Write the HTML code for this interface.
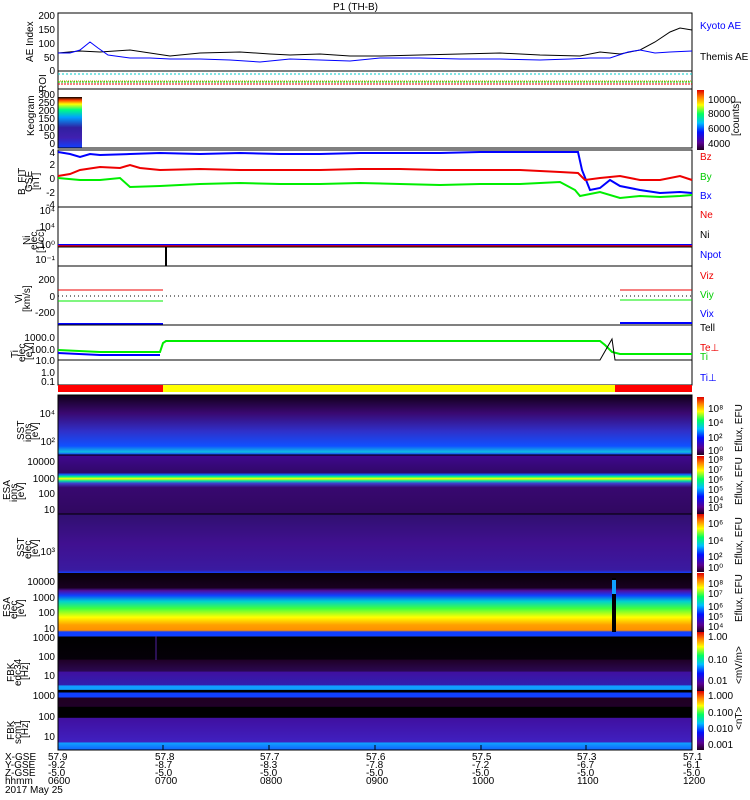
<!DOCTYPE html>
<html><head><meta charset="utf-8"><style>
body{margin:0;background:#fff;width:750px;height:800px;overflow:hidden}
svg{display:block}
text{font-family:"Liberation Sans",sans-serif;font-size:10px;fill:#000}
</style></head><body>
<svg width="750" height="800" viewBox="0 0 750 800" xmlns="http://www.w3.org/2000/svg">
<defs>
<linearGradient id="jet" x1="0" y1="1" x2="0" y2="0">
<stop offset="0" stop-color="#200020"/><stop offset="0.12" stop-color="#5a0090"/><stop offset="0.3" stop-color="#0010ff"/><stop offset="0.45" stop-color="#00c0ff"/><stop offset="0.6" stop-color="#00ff60"/><stop offset="0.75" stop-color="#ffff00"/><stop offset="0.88" stop-color="#ff8000"/><stop offset="1" stop-color="#e00000"/></linearGradient>
<linearGradient id="keo" x1="0" y1="0" x2="0" y2="1">
<stop offset="0" stop-color="#000"/><stop offset="0.06" stop-color="#ff4000"/><stop offset="0.14" stop-color="#ffff00"/><stop offset="0.25" stop-color="#00ff80"/><stop offset="0.4" stop-color="#00a0ff"/><stop offset="0.6" stop-color="#3020a0"/><stop offset="0.8" stop-color="#4020b0"/><stop offset="1" stop-color="#1040ff"/></linearGradient>
<linearGradient id="sst1" x1="0" y1="0" x2="0" y2="1">
<stop offset="0" stop-color="#100018"/><stop offset="0.3" stop-color="#3a0870"/><stop offset="0.6" stop-color="#3030c8"/><stop offset="0.85" stop-color="#1050ff"/><stop offset="0.95" stop-color="#10c0e0"/><stop offset="1" stop-color="#2020ff"/></linearGradient>
<linearGradient id="esa1" x1="0" y1="0" x2="0" y2="1">
<stop offset="0" stop-color="#400890"/><stop offset="0.3" stop-color="#300868"/><stop offset="0.33" stop-color="#1060ff"/><stop offset="0.37" stop-color="#00ff80"/><stop offset="0.4" stop-color="#ffff00"/><stop offset="0.44" stop-color="#00e0a0"/><stop offset="0.48" stop-color="#4040d0"/><stop offset="0.55" stop-color="#380870"/><stop offset="1" stop-color="#300860"/></linearGradient>
<linearGradient id="sst2" x1="0" y1="0" x2="0" y2="1">
<stop offset="0" stop-color="#301070"/><stop offset="0.5" stop-color="#401090"/><stop offset="0.95" stop-color="#3a1aa0"/><stop offset="1" stop-color="#1040ff"/></linearGradient>
<linearGradient id="esa2" x1="0" y1="0" x2="0" y2="1">
<stop offset="0" stop-color="#080008"/><stop offset="0.25" stop-color="#180020"/><stop offset="0.3" stop-color="#5010a0"/><stop offset="0.38" stop-color="#1040ff"/><stop offset="0.48" stop-color="#00d0d0"/><stop offset="0.6" stop-color="#40ff40"/><stop offset="0.75" stop-color="#ffff00"/><stop offset="0.88" stop-color="#ffa000"/><stop offset="0.97" stop-color="#ff9000"/><stop offset="1" stop-color="#1040ff"/></linearGradient>
<linearGradient id="fbk1" x1="0" y1="0" x2="0" y2="1">
<stop offset="0" stop-color="#1040ff"/><stop offset="0.07" stop-color="#1040ff"/><stop offset="0.08" stop-color="#000"/><stop offset="0.45" stop-color="#050008"/><stop offset="0.47" stop-color="#200028"/><stop offset="0.65" stop-color="#2a0850"/><stop offset="0.67" stop-color="#4010a0"/><stop offset="0.88" stop-color="#3020b0"/><stop offset="0.9" stop-color="#10a0ff"/><stop offset="0.96" stop-color="#10a0ff"/><stop offset="0.97" stop-color="#000"/><stop offset="1" stop-color="#000"/></linearGradient>
<linearGradient id="fbk2" x1="0" y1="0" x2="0" y2="1">
<stop offset="0" stop-color="#1040ff"/><stop offset="0.09" stop-color="#1040ff"/><stop offset="0.1" stop-color="#200020"/><stop offset="0.25" stop-color="#200028"/><stop offset="0.26" stop-color="#000"/><stop offset="0.44" stop-color="#000"/><stop offset="0.45" stop-color="#4010a0"/><stop offset="0.86" stop-color="#4020c0"/><stop offset="0.88" stop-color="#10a0ff"/><stop offset="1" stop-color="#1060ff"/></linearGradient>
</defs>

<text x="333" y="10">P1 (TH-B)</text>

<!-- AE -->
<rect x="58" y="13" width="634" height="58" fill="none" stroke="#000"/>
<polyline fill="none" stroke="#000" points="58,53 80,51 100,52 130,50 170,56 200,53 240,52 270,54 290,55 320,54 350,56 380,56 420,55 460,54 500,53 540,55 580,56 600,52 620,54 640,50 655,42 670,32 680,28 692,30"/>
<polyline fill="none" stroke="#00f" points="58,53 70,53 80,50 90,42 98,48 108,55 130,58 150,58 170,59 200,59 230,60 260,62 290,59 320,60 350,61 380,58 420,58 460,59 500,59 540,60 570,59 590,58 610,58 628,52 640,50 655,53 670,52 692,51"/>
<text x="33" y="62" transform="rotate(-90 33 62)">AE Index</text>
<g text-anchor="end"><text x="55" y="19">200</text><text x="55" y="33">150</text><text x="55" y="47">100</text><text x="55" y="61">50</text><text x="55" y="74">0</text></g>
<text x="700" y="29" style="fill:#00f">Kyoto AE</text>
<text x="700" y="60">Themis AE</text>

<!-- ROI -->
<rect x="58" y="71" width="634" height="18" fill="none" stroke="#000"/>
<line x1="58" y1="74" x2="692" y2="74" stroke="#0cc" stroke-dasharray="2,2"/>
<line x1="58" y1="81" x2="692" y2="81" stroke="#c8a000" stroke-dasharray="1,1"/>
<line x1="58" y1="82" x2="692" y2="82" stroke="#0c0" stroke-dasharray="2,1"/>
<line x1="58" y1="84" x2="692" y2="84" stroke="#e00" stroke-dasharray="2,1"/>
<text x="46" y="92" transform="rotate(-90 46 92)">ROI</text>

<!-- Keogram -->
<rect x="58" y="97" width="24" height="51" fill="url(#keo)"/>
<rect x="58" y="89" width="634" height="59" fill="none" stroke="#000"/>
<text x="34" y="136" transform="rotate(-90 34 136)">Keogram</text>
<g text-anchor="end" font-size="9"><text x="55" y="98">300</text><text x="55" y="106">250</text><text x="55" y="114">200</text><text x="55" y="122">150</text><text x="55" y="131">100</text><text x="55" y="139">50</text><text x="55" y="147">0</text></g>
<rect x="697" y="90" width="7" height="60" fill="url(#jet)"/>
<text x="708" y="103">10000</text><text x="708" y="117">8000</text><text x="708" y="132">6000</text><text x="708" y="147">4000</text>
<text x="739" y="136" transform="rotate(-90 739 136)">[counts]</text>

<!-- B -->
<rect x="58" y="150" width="634" height="57" fill="none" stroke="#000"/>
<polyline fill="none" stroke="#00f" stroke-width="2" points="58,152 70,154 80,157 90,154 100,155 130,154 160,153 200,154 240,153 280,154 320,154 360,153 400,153 440,153 480,152 520,152 560,152 578,152 582,170 590,190 600,188 610,180 620,186 640,190 660,193 680,192 692,193"/>
<polyline fill="none" stroke="#e00" stroke-width="2" points="58,176 70,174 80,170 100,167 120,168 130,165 140,168 160,170 200,169 240,170 280,170 320,170 360,169 400,169 440,170 480,170 520,170 560,172 578,173 585,180 600,178 620,176 640,180 660,180 680,176 692,180"/>
<polyline fill="none" stroke="#0e0" stroke-width="2" points="58,178 80,180 100,180 120,178 130,187 160,186 200,184 240,183 280,184 320,184 360,183 400,184 440,185 480,184 520,184 560,182 575,190 580,196 600,192 620,198 640,196 660,197 680,196 692,195"/>
<text x="25" y="195" transform="rotate(-90 25 195)">B_FIT</text>
<text x="32" y="192" transform="rotate(-90 32 192)">GSE</text>
<text x="39" y="190" transform="rotate(-90 39 190)">[nT]</text>
<g text-anchor="end"><text x="55" y="156">4</text><text x="55" y="168">2</text><text x="55" y="182">0</text><text x="55" y="196">-2</text><text x="55" y="208">-4</text></g>
<text x="700" y="160" style="fill:#e00">Bz</text><text x="700" y="180" style="fill:#0c0">By</text><text x="700" y="199" style="fill:#00f">Bx</text>

<!-- Ni -->
<rect x="58" y="207" width="634" height="59" fill="none" stroke="#000"/>
<line x1="58" y1="245" x2="692" y2="245" stroke="#00f" stroke-width="2"/>
<line x1="58" y1="246" x2="692" y2="246" stroke="#e00" stroke-width="1.5"/>
<line x1="58" y1="247" x2="692" y2="247" stroke="#000"/>
<line x1="166" y1="247" x2="166" y2="266" stroke="#000" stroke-width="2"/>
<text x="30" y="245" transform="rotate(-90 30 245)">Ni</text>
<text x="37" y="250" transform="rotate(-90 37 250)">elec</text>
<text x="44" y="253" transform="rotate(-90 44 253)">[1/cc]</text>
<g text-anchor="end"><text x="55" y="214">10⁴</text><text x="55" y="230">10⁴</text><text x="55" y="248">10⁰</text><text x="55" y="263">10⁻¹</text></g>
<text x="700" y="218" style="fill:#e00">Ne</text><text x="700" y="238">Ni</text><text x="700" y="258" style="fill:#00f">Npot</text>

<!-- Vi -->
<rect x="58" y="266" width="634" height="59" fill="none" stroke="#000"/>
<line x1="58" y1="296" x2="692" y2="296" stroke="#000" stroke-dasharray="1,3"/>
<line x1="58" y1="290" x2="163" y2="290" stroke="#e00"/><line x1="620" y1="290" x2="692" y2="290" stroke="#e00"/>
<line x1="58" y1="301" x2="163" y2="301" stroke="#0e0"/><line x1="620" y1="300" x2="692" y2="300" stroke="#0e0"/>
<line x1="58" y1="324" x2="163" y2="324" stroke="#00f" stroke-width="2"/><line x1="620" y1="323" x2="692" y2="323" stroke="#00f" stroke-width="2"/>
<text x="22" y="303" transform="rotate(-90 22 303)">Vi</text>
<text x="30" y="312" transform="rotate(-90 30 312)">[km/s]</text>
<g text-anchor="end"><text x="55" y="283">200</text><text x="55" y="300">0</text><text x="55" y="316">-200</text></g>
<text x="700" y="279" style="fill:#e00">Viz</text><text x="700" y="298" style="fill:#0c0">Viy</text><text x="700" y="317" style="fill:#00f">Vix</text>

<!-- Ti -->
<rect x="58" y="325" width="634" height="60" fill="none" stroke="#000"/>
<polyline fill="none" stroke="#0e0" stroke-width="2" points="58,350 100,352 140,352 160,352 163,343 166,341 600,341 605,345 612,352 620,354 692,354"/>
<polyline fill="none" stroke="#00f" stroke-width="2" points="58,353 100,355 160,355"/>
<polyline fill="none" stroke="#000" points="58,360 600,360 612,339 615,360 692,360"/>
<text x="18" y="358" transform="rotate(-90 18 358)">Ti</text>
<text x="25" y="362" transform="rotate(-90 25 362)">elec</text>
<text x="32" y="360" transform="rotate(-90 32 360)">[eV]</text>
<g text-anchor="end" font-size="9.5"><text x="55" y="341">1000.0</text><text x="55" y="353">100.0</text><text x="55" y="364">10.0</text><text x="55" y="376">1.0</text><text x="55" y="385">0.1</text></g>
<text x="700" y="331">Tell</text><text x="700" y="351" style="fill:#e00">Te⊥</text><text x="700" y="360" style="fill:#0c0">Ti</text><text x="700" y="381" style="fill:#00f">Ti⊥</text>

<!-- flag bar -->
<rect x="58" y="385" width="105" height="7" fill="#f00"/><rect x="163" y="385" width="452" height="7" fill="#ff0"/><rect x="615" y="385" width="77" height="7" fill="#f00"/>

<!-- spectrograms -->
<rect x="58" y="395" width="634" height="60" fill="url(#sst1)"/>
<rect x="58" y="455" width="634" height="59" fill="url(#esa1)"/>
<rect x="58" y="514" width="634" height="59" fill="url(#sst2)"/>
<rect x="58" y="573" width="634" height="59" fill="url(#esa2)"/>
<rect x="612" y="578" width="4" height="54" fill="#000"/>
<rect x="612" y="580" width="4" height="14" fill="#10a0ff"/>
<rect x="58" y="632" width="634" height="60" fill="url(#fbk1)"/>
<line x1="156" y1="636" x2="156" y2="660" stroke="#5020a0"/>
<rect x="58" y="692" width="634" height="58" fill="url(#fbk2)"/>
<g stroke="#000" fill="none"><line x1="58" y1="455" x2="692" y2="455"/><line x1="58" y1="514" x2="692" y2="514"/><line x1="58" y1="692" x2="692" y2="692"/></g>
<rect x="58" y="395" width="634" height="355" fill="none" stroke="#000"/>

<text x="24" y="440" transform="rotate(-90 24 440)">SST</text><text x="31" y="442" transform="rotate(-90 31 442)">ions</text><text x="38" y="440" transform="rotate(-90 38 440)">[eV]</text>
<text x="10" y="500" transform="rotate(-90 10 500)">ESA</text><text x="17" y="502" transform="rotate(-90 17 502)">ions</text><text x="24" y="500" transform="rotate(-90 24 500)">[eV]</text>
<text x="24" y="557" transform="rotate(-90 24 557)">SST</text><text x="31" y="559" transform="rotate(-90 31 559)">elec</text><text x="38" y="557" transform="rotate(-90 38 557)">[eV]</text>
<text x="10" y="617" transform="rotate(-90 10 617)">ESA</text><text x="17" y="619" transform="rotate(-90 17 619)">elec</text><text x="24" y="617" transform="rotate(-90 24 617)">[eV]</text>
<text x="14" y="682" transform="rotate(-90 14 682)">FBK</text><text x="21" y="686" transform="rotate(-90 21 686)">edc34</text><text x="28" y="680" transform="rotate(-90 28 680)">[Hz]</text>
<text x="14" y="740" transform="rotate(-90 14 740)">FBK</text><text x="21" y="744" transform="rotate(-90 21 744)">scm1</text><text x="28" y="738" transform="rotate(-90 28 738)">[Hz]</text>
<g text-anchor="end">
<text x="55" y="417">10⁴</text><text x="55" y="445">10²</text>
<text x="55" y="465">10000</text><text x="55" y="482">1000</text><text x="55" y="497">100</text><text x="55" y="513">10</text>
<text x="55" y="555">10³</text>
<text x="55" y="585">10000</text><text x="55" y="601">1000</text><text x="55" y="616">100</text><text x="55" y="632">10</text>
<text x="55" y="641">1000</text><text x="55" y="660">100</text><text x="55" y="679">10</text>
<text x="55" y="699">1000</text><text x="55" y="720">100</text><text x="55" y="740">10</text>
</g>
<!-- colorbars -->
<rect x="697" y="397" width="7" height="58" fill="url(#jet)"/>
<rect x="697" y="456" width="7" height="58" fill="url(#jet)"/>
<rect x="697" y="514" width="7" height="58" fill="url(#jet)"/>
<rect x="697" y="573" width="7" height="59" fill="url(#jet)"/>
<rect x="697" y="632" width="7" height="59" fill="url(#jet)"/>
<rect x="697" y="691" width="7" height="59" fill="url(#jet)"/>
<g font-size="9">
<text x="708" y="412">10⁸</text><text x="708" y="426">10⁴</text><text x="708" y="441">10²</text><text x="708" y="454">10⁰</text>
<text x="708" y="463">10⁸</text><text x="708" y="473">10⁷</text><text x="708" y="483">10⁶</text><text x="708" y="493">10⁵</text><text x="708" y="503">10⁴</text><text x="708" y="511">10³</text>
<text x="708" y="527">10⁶</text><text x="708" y="544">10⁴</text><text x="708" y="560">10²</text><text x="708" y="571">10⁰</text>
<text x="708" y="587">10⁸</text><text x="708" y="597">10⁷</text><text x="708" y="610">10⁶</text><text x="708" y="620">10⁵</text><text x="708" y="630">10⁴</text>
<text x="708" y="640">1.00</text><text x="708" y="663">0.10</text><text x="708" y="684">0.01</text>
<text x="708" y="699">1.000</text><text x="708" y="716">0.100</text><text x="708" y="732">0.010</text><text x="708" y="748">0.001</text>
</g>
<text x="742" y="452" transform="rotate(-90 742 452)">Eflux, EFU</text>
<text x="742" y="505" transform="rotate(-90 742 505)">Eflux, EFU</text>
<text x="742" y="565" transform="rotate(-90 742 565)">Eflux, EFU</text>
<text x="742" y="622" transform="rotate(-90 742 622)">Eflux, EFU</text>
<text x="742" y="684" transform="rotate(-90 742 684)">&lt;mV/m&gt;</text>
<text x="742" y="730" transform="rotate(-90 742 730)">&lt;nT&gt;</text>

<!-- x ticks -->
<g stroke="#000"><line x1="163" y1="745" x2="163" y2="750"/><line x1="269" y1="745" x2="269" y2="750"/><line x1="375" y1="745" x2="375" y2="750"/><line x1="481" y1="745" x2="481" y2="750"/><line x1="586" y1="745" x2="586" y2="750"/></g>
<g font-size="9.5">
<text x="5" y="760">X-GSE</text><text x="5" y="768">Y-GSE</text><text x="5" y="776">Z-GSE</text><text x="5" y="784">hhmm</text><text x="5" y="793">2017 May 25</text>
<g><text x="48" y="760">57.9</text><text x="48" y="768">-9.2</text><text x="48" y="776">-5.0</text><text x="48" y="784">0600</text></g>
<g><text x="155" y="760">57.8</text><text x="155" y="768">-8.7</text><text x="155" y="776">-5.0</text><text x="155" y="784">0700</text></g>
<g><text x="260" y="760">57.7</text><text x="260" y="768">-8.3</text><text x="260" y="776">-5.0</text><text x="260" y="784">0800</text></g>
<g><text x="366" y="760">57.6</text><text x="366" y="768">-7.8</text><text x="366" y="776">-5.0</text><text x="366" y="784">0900</text></g>
<g><text x="472" y="760">57.5</text><text x="472" y="768">-7.2</text><text x="472" y="776">-5.0</text><text x="472" y="784">1000</text></g>
<g><text x="577" y="760">57.3</text><text x="577" y="768">-6.7</text><text x="577" y="776">-5.0</text><text x="577" y="784">1100</text></g>
<g><text x="683" y="760">57.1</text><text x="683" y="768">-6.1</text><text x="683" y="776">-5.0</text><text x="683" y="784">1200</text></g>
</g>
</svg>
</body></html>
